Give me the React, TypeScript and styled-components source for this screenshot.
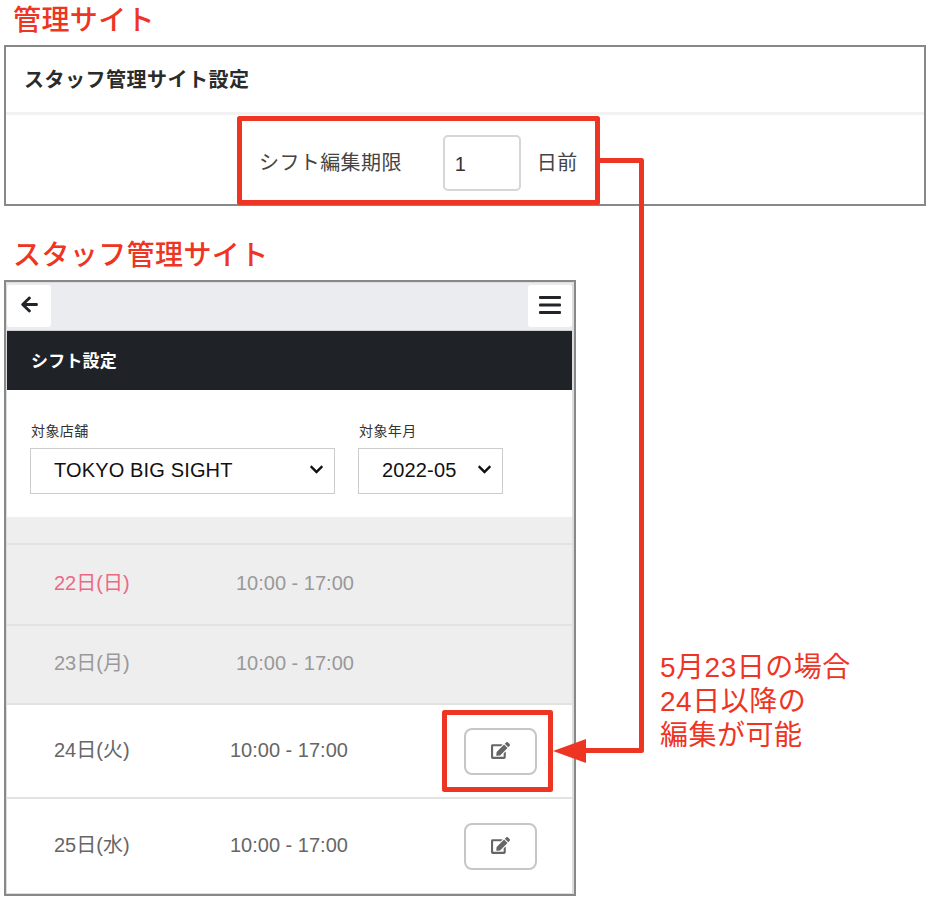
import React from 'react'
import styled, { createGlobalStyle } from 'styled-components'
import { FaArrowLeft, FaChevronDown, FaEdit } from 'react-icons/fa'

const RED = '#ee3524'

const GlobalStyle = createGlobalStyle`
  html, body {
    margin: 0;
    background: #fff;
  }

  body {
    font-family: "Liberation Sans", "Noto Sans CJK JP", sans-serif;
    color: #333;
  }
`

const Page = styled.div`
  position: relative;
  box-sizing: border-box;
  width: 930px;
  height: 902px;
  overflow: hidden;
  padding-left: 4px;
`

const SectionTitle = styled.h2<{ $height: number; $top?: number; $bottom?: number }>`
  box-sizing: border-box;
  margin: 0;
  padding: ${(p) => p.$top ?? 0}px 0 ${(p) => p.$bottom ?? 0}px 9px;
  height: ${(p) => p.$height}px;
  display: flex;
  align-items: center;
  font-size: 28px;
  font-weight: 500;
  letter-spacing: 0.4px;
  color: ${RED};
`

const SettingsPanel = styled.section`
  box-sizing: border-box;
  width: 922px;
  height: 161px;
  border: 2px solid #888;
`

const PanelHeader = styled.div`
  box-sizing: border-box;
  height: 68px;
  padding: 0 0 2px 18px;
  display: flex;
  align-items: center;
  border-bottom: 3px solid #f2f2f2;
  font-size: 20px;
  font-weight: 700;
  letter-spacing: 0.5px;
  color: #2b2b2b;
`

const PanelRow = styled.div`
  display: flex;
  align-items: center;
  height: 91px;
  padding-left: 253px;
  padding-top: 1px;
  box-sizing: border-box;
  font-size: 20px;
  letter-spacing: 0.4px;
  color: #444;
`

const DeadlineInput = styled.input`
  box-sizing: border-box;
  width: 78px;
  height: 56px;
  margin: 4px 16px 0 41px;
  padding: 2px 10px 0;
  border: 2px solid #d6d6d6;
  border-radius: 5px;
  font: inherit;
  color: #333;
  outline: none;
`

const LowerSection = styled.div`
  display: flex;
  align-items: flex-start;
`

const Phone = styled.section`
  box-sizing: border-box;
  width: 572px;
  height: 616px;
  border: 2px solid #888;
  padding: 1px 2px 1px 1px;
  background: #ddd;
  display: flex;
  flex-direction: column;
`

const TopBar = styled.div`
  flex: none;
  height: 48px;
  display: flex;
  justify-content: space-between;
  background: #ebecef;
  border-bottom: 1px solid #cfcfcf;
  box-sizing: border-box;
  padding: 2px 0 3px;
`

const NavButton = styled.button`
  width: 44px;
  padding: 0 0 3px;
  border: 0;
  border-radius: 3px;
  background: #fff;
  color: #212529;
  display: flex;
  align-items: center;
  justify-content: center;
  font-size: 19px;
`

const TitleBar = styled.h3`
  flex: none;
  box-sizing: border-box;
  margin: 0;
  height: 59px;
  padding: 0 0 2px 24px;
  display: flex;
  align-items: center;
  background: #1f2226;
  color: #fff;
  font-size: 17px;
  font-weight: 700;
  letter-spacing: 0.2px;
`

const FilterForm = styled.div`
  flex: none;
  box-sizing: border-box;
  height: 127px;
  padding: 32px 0 0 23px;
  display: flex;
  gap: 23px;
  background: #fff;
`

const Field = styled.label<{ $width: number }>`
  display: flex;
  flex-direction: column;
  gap: 8px;
  width: ${(p) => p.$width}px;
  font-size: 14px;
  line-height: 18px;
  letter-spacing: 0.4px;
  text-indent: 1px;
  color: #333;
`

const SelectBox = styled.div`
  position: relative;
  text-indent: 0;
  line-height: 0;
  color: #111;

  svg {
    position: absolute;
    top: 14px;
    right: 11px;
    font-size: 15px;
    pointer-events: none;
  }
`

const Select = styled.select`
  appearance: none;
  box-sizing: border-box;
  width: 100%;
  height: 46px;
  padding: 0 0 2px 23px;
  border: 1px solid #ccc;
  border-radius: 0;
  background: #fff;
  font: 20px "Liberation Sans", sans-serif;
  letter-spacing: 0.15px;
  color: #111;
`

const ListSpacer = styled.div`
  flex: none;
  height: 28px;
  background: #eee;
  border-bottom: 2px solid #e2e2e2;
  box-sizing: border-box;
`

const ShiftRow = styled.div<{ $locked?: boolean; $height: number }>`
  flex: none;
  box-sizing: border-box;
  height: ${(p) => p.$height}px;
  padding: 0 35px 0 47px;
  display: flex;
  align-items: center;
  border-bottom: 2px solid #e2e2e2;
  background: ${(p) => (p.$locked ? '#eee' : '#fff')};
  font-size: 20px;
  color: ${(p) => (p.$locked ? '#999' : '#666')};

  &:last-child {
    border-bottom: 0;
  }
`

const ShiftInfo = styled.div`
  flex: 1;
  display: flex;
  align-items: baseline;
  padding-bottom: 6px;
`

const ShiftDate = styled.span<{ $locked?: boolean; $holiday?: boolean }>`
  width: ${(p) => (p.$locked ? 182 : 176)}px;
  color: ${(p) => (p.$holiday ? '#ea6a85' : 'inherit')};
`

const EditButton = styled.button`
  width: 73px;
  height: 47px;
  padding: 0 0 2px;
  border: 2px solid #c6c6c6;
  border-radius: 8px;
  background: #fff;
  color: #666;
  display: flex;
  align-items: center;
  justify-content: center;
  font-size: 19px;
`

const Note = styled.p`
  margin: 371px 0 0 84px;
  font-size: 28px;
  line-height: 34px;
  letter-spacing: 0.5px;
  color: ${RED};
`

const Annotations = styled.svg`
  position: absolute;
  top: 0;
  left: 0;
  pointer-events: none;
`

const BarsIcon = () => (
  <svg width="22" height="18" viewBox="0 0 22 18" fill="#212529">
    <rect x="0" y="0" width="22" height="3" rx="1" />
    <rect x="0" y="7.5" width="22" height="3" rx="1" />
    <rect x="0" y="15" width="22" height="3" rx="1" />
  </svg>
)

const shifts = [
  { date: '22日(日)', locked: true, holiday: true, height: 81 },
  { date: '23日(月)', locked: true, height: 79 },
  { date: '24日(火)', height: 94 },
  { date: '25日(水)', height: 94 },
]

const App: React.FC = () => (
  <>
    <GlobalStyle />
    <Page>
      <SectionTitle $height={45} $bottom={10}>
        管理サイト
      </SectionTitle>
      <SettingsPanel>
        <PanelHeader>スタッフ管理サイト設定</PanelHeader>
        <PanelRow>
          シフト編集期限
          <DeadlineInput defaultValue="1" />
          日前
        </PanelRow>
      </SettingsPanel>

      <SectionTitle $height={74} $top={20}>
        スタッフ管理サイト
      </SectionTitle>
      <LowerSection>
        <Phone>
          <TopBar>
            <NavButton>
              <FaArrowLeft />
            </NavButton>
            <NavButton>
              <BarsIcon />
            </NavButton>
          </TopBar>
          <TitleBar>シフト設定</TitleBar>
          <FilterForm>
            <Field $width={305}>
              対象店舗
              <SelectBox>
                <Select defaultValue="tbs">
                  <option value="tbs">TOKYO BIG SIGHT</option>
                </Select>
                <FaChevronDown />
              </SelectBox>
            </Field>
            <Field $width={145}>
              対象年月
              <SelectBox>
                <Select defaultValue="2022-05">
                  <option value="2022-05">2022-05</option>
                </Select>
                <FaChevronDown />
              </SelectBox>
            </Field>
          </FilterForm>
          <ListSpacer />
          {shifts.map((s) => (
            <ShiftRow key={s.date} $locked={s.locked} $height={s.height}>
              <ShiftInfo>
                <ShiftDate $locked={s.locked} $holiday={s.holiday}>
                  {s.date}
                </ShiftDate>
                <span>10:00 - 17:00</span>
              </ShiftInfo>
              {!s.locked && (
                <EditButton>
                  <FaEdit />
                </EditButton>
              )}
            </ShiftRow>
          ))}
        </Phone>
        <Note>
          5月23日の場合
          <br />
          24日以降の
          <br />
          編集が可能
        </Note>
      </LowerSection>

      <Annotations width="930" height="902" viewBox="0 0 930 902">
        <g fill="none" stroke={RED} strokeWidth="5" strokeLinejoin="round">
          <rect x="239.5" y="118.5" width="358" height="84" />
          <rect x="444.5" y="712.5" width="106" height="77" />
          <path d="M600 160.5H641.5V750.5H580" />
        </g>
        <polygon points="553,751 586,739 586,763" fill={RED} />
      </Annotations>
    </Page>
  </>
)

export default App
